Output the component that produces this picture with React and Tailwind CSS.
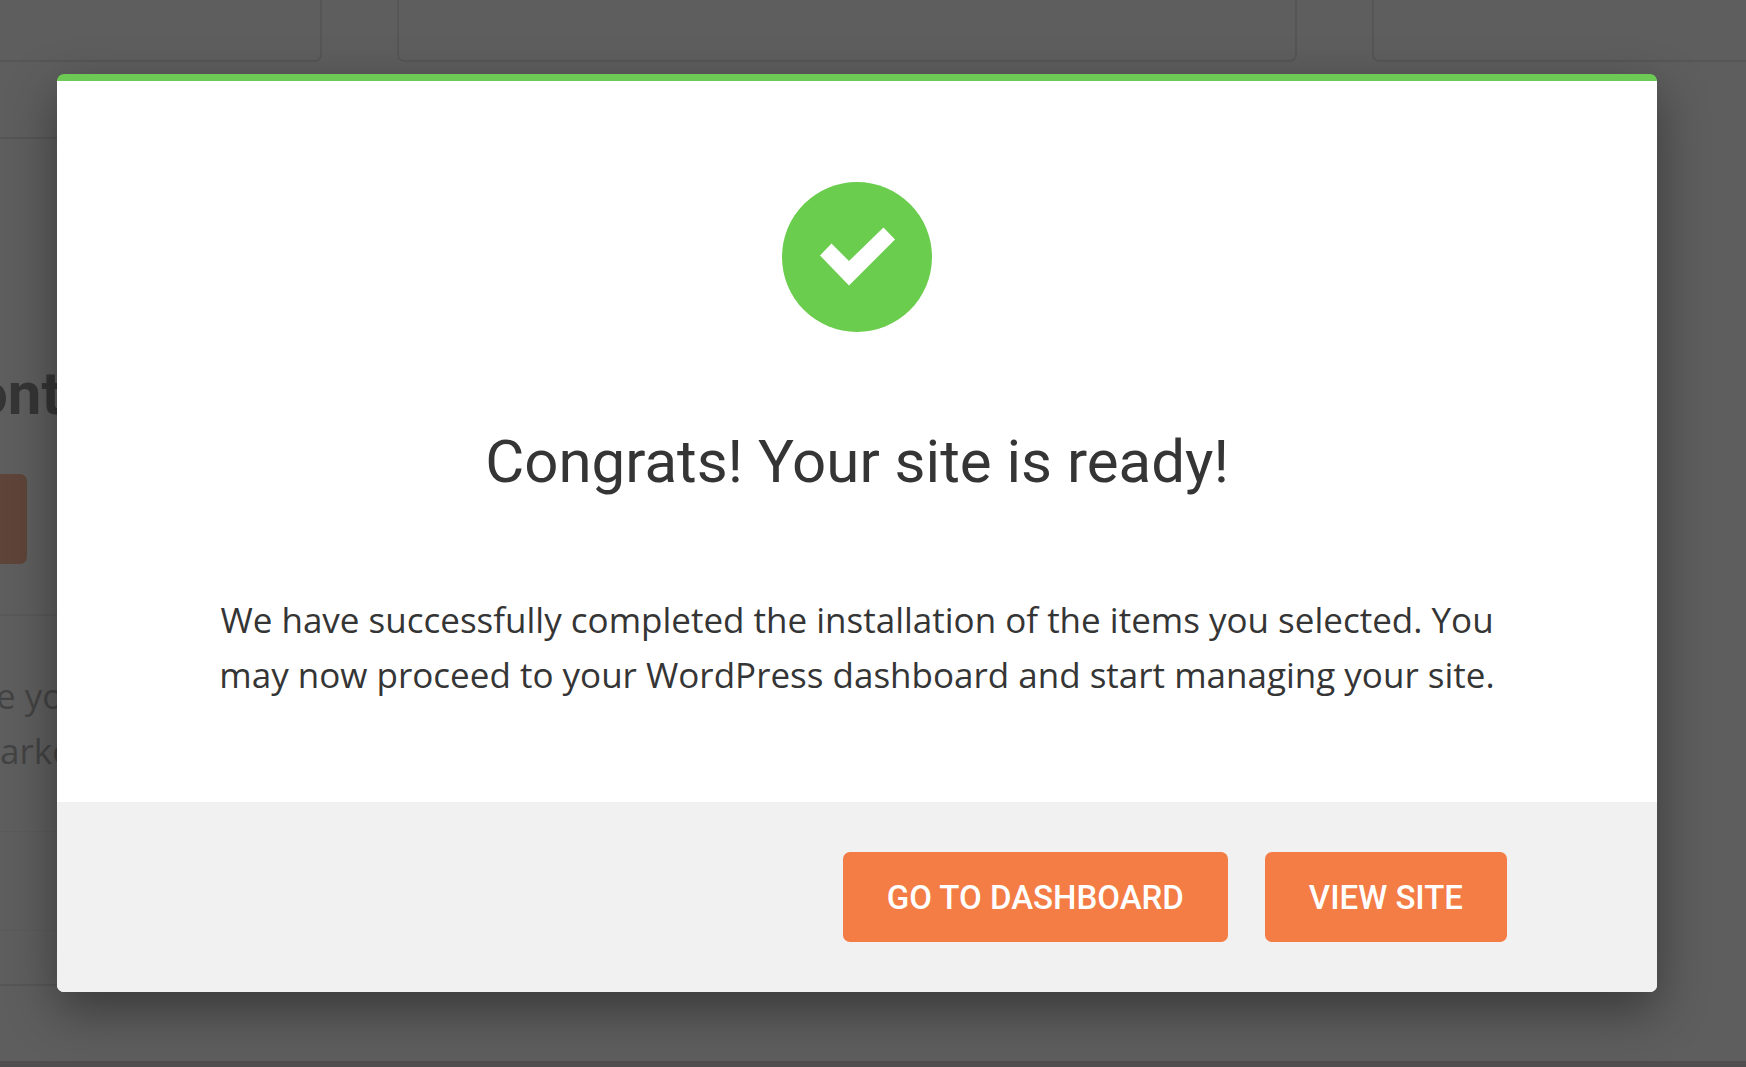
import React from "react";

const CheckBadge = () => (
  <svg viewBox="0 0 150 150" className="w-[150px] h-[150px]" aria-hidden="true">
    <circle cx="75" cy="75" r="75" fill="#6bcd4d" />
    <path d="M38 73.5 L49.5 61.5 L67 79 L101.5 45.5 L113 57.5 L67 103.5 Z" fill="#fff" />
  </svg>
);

const DialogButton = ({ children }) => (
  <button
    type="button"
    className="h-[90px] px-[44px] rounded-[7px] bg-[#f47c45] text-white font-['Roboto',sans-serif] font-medium text-[33px] leading-none whitespace-nowrap hover:bg-[#e86f37] transition-colors"
  >
    {children}
  </button>
);

const PageBehind = () => (
  <div className="h-screen overflow-hidden flex flex-col bg-white" aria-hidden="true">
    <div className="grid grid-cols-[322px_minmax(0,1fr)_374px] gap-[75px] h-[62px] shrink-0">
      <div className="border-r-2 border-b-2 border-[#d4d4d4] rounded-br-[7px]" />
      <div className="border-x-2 border-b-2 border-[#d4d4d4] rounded-b-[7px]" />
      <div className="border-l-2 border-b-2 border-[#d4d4d4] rounded-bl-[7px]" />
    </div>
    <div className="w-1/2 h-[77px] shrink-0 border-b-2 border-[#d4d4d4]" />
    <div className="w-1/2 h-[477px] shrink-0 border-b-2 border-[#e6e6e6] flex flex-col justify-end gap-[48px] pb-[50px]">
      <p className="-ml-[26px] font-['Roboto',sans-serif] font-bold text-[60px] leading-[64px] text-[#333]">ont</p>
      <div className="w-[27px] h-[90px] rounded-r-[7px] bg-[#ff7c45]" />
    </div>
    <div className="w-1/2 h-[216px] shrink-0 border-b border-[#f0f0f0] pt-[52px] font-['Open_Sans',sans-serif] text-[35px] leading-[55px] text-[#777]">
      <p className="-ml-1">e yo</p>
      <p>arke</p>
    </div>
    <div className="w-1/2 h-[99px] shrink-0 border-b border-[#f0f0f0]" />
    <div className="w-1/2 h-[55px] shrink-0 border-b-2 border-[#d4d4d4]" />
    <div className="flex-1" />
    <div className="h-[6px] shrink-0 bg-[#b6a9a9]" />
  </div>
);

const App = () => {
  return (
    <main className="relative min-h-screen">
      <PageBehind />
      <div className="absolute inset-0 bg-[#363636]/80 flex items-center pl-[57px] pr-[89px] pb-px">
        <div
          role="dialog"
          aria-modal="true"
          aria-labelledby="dialog-title"
          className="w-full max-w-[1600px] mx-auto rounded-[7px] overflow-hidden bg-white border-t-[7px] border-[#6dca54] shadow-[0_18px_50px_rgba(0,0,0,0.4)]"
        >
          <div className="flex flex-col items-center px-[150px] pt-[101px] pb-[100px] text-center text-[#353535]">
            <CheckBadge />
            <h1 id="dialog-title" className="mt-[90px] font-['Roboto',sans-serif] text-[60px] leading-[80px]">
              Congrats! Your site is ready!
            </h1>
            <p className="mt-[90px] font-['Open_Sans',sans-serif] text-[35px] leading-[55px]">
              We have successfully completed the installation of the items you selected. You may now proceed to your
              WordPress dashboard and start managing your site.
            </p>
          </div>
          <div className="flex justify-end gap-[37px] px-[150px] py-[50px] bg-[#f1f1f1]">
            <DialogButton>GO TO DASHBOARD</DialogButton>
            <DialogButton>VIEW SITE</DialogButton>
          </div>
        </div>
      </div>
    </main>
  );
};

export default App;
